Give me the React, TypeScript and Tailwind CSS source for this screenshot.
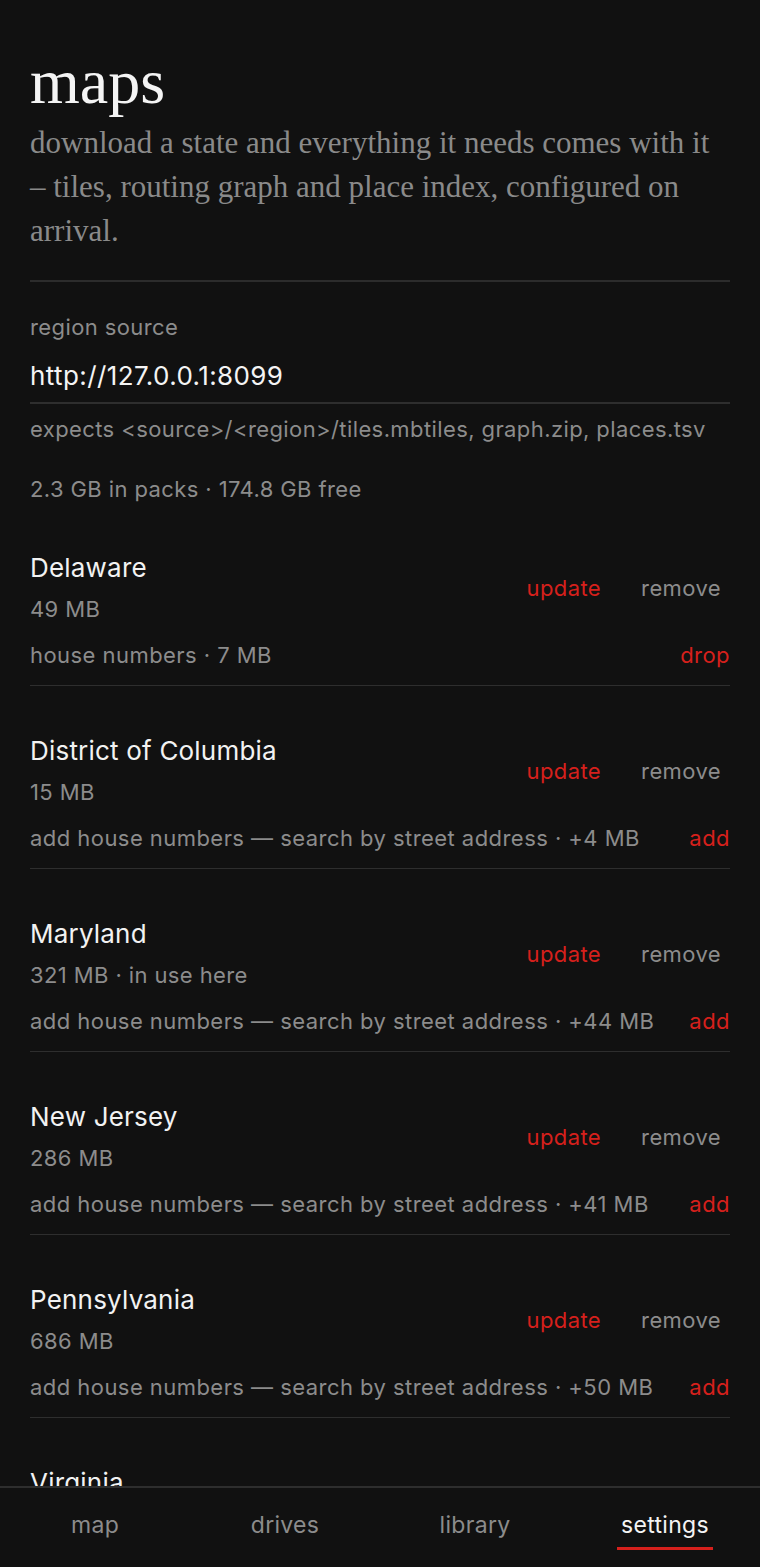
const regions = [
  { name: "Delaware", size: "49 MB", extra: "house numbers · 7 MB", action: "drop" },
  { name: "District of Columbia", size: "15 MB", extra: "add house numbers — search by street address · +4 MB", action: "add" },
  { name: "Maryland", size: "321 MB · in use here", extra: "add house numbers — search by street address · +44 MB", action: "add" },
  { name: "New Jersey", size: "286 MB", extra: "add house numbers — search by street address · +41 MB", action: "add" },
  { name: "Pennsylvania", size: "686 MB", extra: "add house numbers — search by street address · +50 MB", action: "add" },
  { name: "Virginia", size: "1.1 GB", extra: "add house numbers — search by street address · +96 MB", action: "add" },
];

const tabs = ["map", "drives", "library", "settings"];

function RegionRow({ r }: { r: (typeof regions)[number] }) {
  return (
    <div className="border-b border-[#2e2e2e] pt-[49px] pb-[16px]">
      <div className="flex items-center justify-between">
        <div>
          <div className="text-[26px] leading-[32px] tracking-[0.2px] text-[#f2f2f2]">{r.name}</div>
          <div className="mt-[11px] text-[22px] leading-[28px] tracking-[0.4px] text-[#8c8c8c]">{r.size}</div>
        </div>
        <div className="flex items-center text-[22px] leading-[28px] tracking-[0.4px]">
          <button className="px-[10px] text-[#d6201c]">update</button>
          <button className="pl-[30px] pr-[9px] text-[#8c8c8c]">remove</button>
        </div>
      </div>
      <div className="mt-[18px] flex items-center justify-between text-[22px] leading-[28px] tracking-[0.45px]">
        <span className="text-[#8c8c8c]">{r.extra}</span>
        <button className="text-[#d6201c]">{r.action}</button>
      </div>
    </div>
  );
}

export default function App() {
  return (
    <div
      className="flex h-screen flex-col overflow-hidden bg-[#111111]"
      style={{ fontFamily: "Inter, 'Liberation Sans', sans-serif" }}
    >
      <main className="flex-1 overflow-hidden px-[30px]">
        <h1
          className="pt-[48px] pb-[5px] text-[64px] leading-[68px] text-[#f4f4f4]"
          style={{ fontFamily: "'Liberation Serif', serif" }}
        >
          maps
        </h1>
        <p
          className="text-[31px] leading-[44px] text-[#8a8a8a]"
          style={{ fontFamily: "'Liberation Serif', serif" }}
        >
          download a state and everything it needs comes with it
          <br />– tiles, routing graph and place index, configured on arrival.
        </p>
        <div className="mt-[27px] border-t-2 border-[#2c2c2c]" />
        <div className="mt-[31px] text-[22px] leading-[28px] tracking-[0.4px] text-[#8c8c8c]">region source</div>
        <div className="mt-[19px] border-b-2 border-[#2e2e2e] pb-[10px] text-[26px] leading-[32px] tracking-[0.4px] text-[#f4f4f4]">
          http://127.0.0.1:8099
        </div>
        <div className="mt-[11px] text-[22px] leading-[28px] tracking-[0.4px] text-[#8c8c8c]">
          expects &lt;source&gt;/&lt;region&gt;/tiles.mbtiles, graph.zip, places.tsv
        </div>
        <div className="mt-[32px] text-[22px] leading-[28px] tracking-[0.4px] text-[#8c8c8c]">2.3 GB in packs · 174.8 GB free</div>
        {regions.map((r) => (
          <RegionRow key={r.name} r={r} />
        ))}
      </main>
      <nav className="grid h-[81px] shrink-0 grid-cols-4 border-t-2 border-[#2e2e2e] bg-[#111111]">
        {tabs.map((t) => {
          const active = t === "settings";
          return (
            <div key={t} className="flex justify-center pt-[22px]">
              <div className="relative h-[30px]">
                <span className={`text-[23px] leading-[30px] tracking-[0.3px] ${active ? "text-[#f4f4f4]" : "text-[#8c8c8c]"}`}>{t}</span>
                {active && <div className="absolute left-[-4px] right-[-4px] top-[37px] h-[3px] bg-[#d6201c]" />}
              </div>
            </div>
          );
        })}
      </nav>
    </div>
  );
}
